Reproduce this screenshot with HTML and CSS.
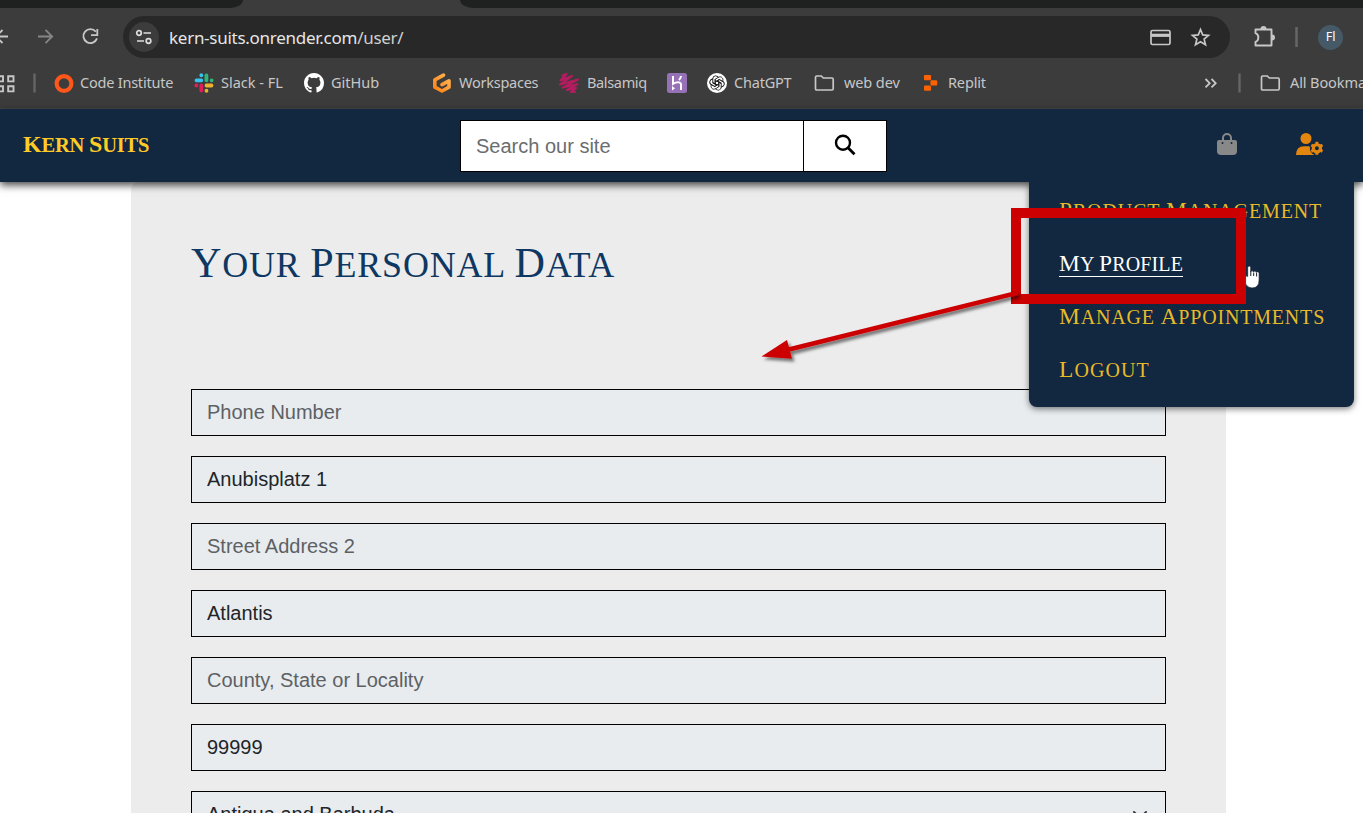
FILE: index.html
```html
<!DOCTYPE html>
<html lang="en">
<head>
<meta charset="utf-8">
<title>Kern Suits</title>
<link rel="stylesheet" href="styles.css">
</head>
<body>
<div class="browser">
  <div class="tabs"><div class="tab-left"></div><div class="tab-right"></div></div>
  <div class="toolbar">
    <svg class="nav-icons" width="123" height="42" viewBox="0 16 123 42" fill="none" stroke="#c7c7c7" stroke-width="1.8"><path d="M-4 36.500H8M-4 36.500L2.500 30M-4 36.500L2.500 43"/><path stroke="#858585" d="M38 36.500H52M45.500 29.800L52.200 36.500L45.500 43.200"/><path d="M95.800 31.600A7 7 0 1 0 97 38.400"/><path d="M97.300 29V35.200H91"/></svg>
    <div class="address">
      <svg width="30" height="30" viewBox="0 0 30 30"><circle cx="15" cy="15" r="15" fill="#3c3c3c"/><g fill="none" stroke="#dedede" stroke-width="1.700"><circle cx="10" cy="11" r="2.300"/><path d="M14.500 11H22M8 19H15"/><circle cx="19.500" cy="19" r="2.300"/></g></svg>
      <span class="url">kern-suits.onrender.com<span class="path">/user/</span></span>
      <svg class="addr-icons" width="66" height="24" viewBox="1147 25 66 24" fill="none" stroke="#c7c7c7" stroke-width="1.700"><rect x="1151" y="30.500" width="19" height="14" rx="1.500"/><path stroke-width="3.200" d="M1151 35.300H1170"/><path d="M1200.500 29.500L1202.700 34.900L1208.500 35.400L1204.100 39.100L1205.500 44.800L1200.500 41.700L1195.500 44.800L1196.900 39.100L1192.500 35.400L1198.300 34.900Z"/></svg>
    </div>
    <svg class="ext" width="56" height="30" viewBox="1248 22 56 30" fill="none" stroke="#c7c7c7" stroke-width="1.900"><path stroke-linejoin="round" d="M1255.500 29.500H1271.500V45.500H1255.500V41.800C1259.300 40.500 1259.300 34.500 1255.500 33.200Z"/><path fill="#c7c7c7" stroke="none" d="M1260.500 29a3 3 0 0 1 6 0zM1272 34.500a3 3 0 0 1 0 6z"/><path stroke="#666" stroke-width="2.500" d="M1296.500 27V47"/></svg>
    <div class="avatar">Fl</div>
  </div>
  <div class="bookmarks">
    <svg width="40" height="26" viewBox="0 70 40 26" fill="none" stroke="#c7c7c7" stroke-width="1.900"><path d="M-3 76.200H3V81.400H-3zM8.200 76.200H13.500V81.400H8.200zM-3 86.200H3V91.400H-3zM8.200 86.200H13.500V91.400H8.200z"/><path stroke="#666" stroke-width="2.300" d="M34.500 73.500V92.500"/></svg>
    <div class="bm"><svg width="20" height="20"><circle cx="10" cy="10.500" r="7.400" fill="none" stroke="#ff5619" stroke-width="4.200"/></svg><span class="w1">Code Institute</span></div>
    <div class="bm"><svg width="20" height="20" fill="none" stroke-width="3.800" stroke-linecap="round"><path stroke="#36c5f0" d="M2.500 7.300H7.300M7.300 2.200V2.300"/><path stroke="#2eb67d" d="M12.400 2.500V7.300M17.600 7.300H17.700"/><path stroke="#ecb22e" d="M12.500 12.500H17.500M12.500 17.700V17.800"/><path stroke="#e01e5a" d="M7.300 12.500V17.500M2.300 12.500H2.400"/></svg><span class="w2">Slack - FL</span></div>
    <div class="bm"><svg width="20" height="20" viewBox="0 0 16 16"><path fill="#fff" d="M8 0C3.580 0 0 3.580 0 8c0 3.540 2.290 6.530 5.470 7.590.4.070.55-.17.55-.38 0-.19-.01-.82-.01-1.490-2.010.37-2.530-.49-2.690-.94-.09-.23-.48-.94-.82-1.130-.28-.15-.68-.52-.01-.53.63-.01 1.080.58 1.230.82.72 1.210 1.870.87 2.330.66.070-.52.28-.87.51-1.070-1.780-.2-3.640-.89-3.640-3.950 0-.87.31-1.590.82-2.150-.08-.2-.36-1.020.08-2.120 0 0 .67-.21 2.200.82a7.600 7.600 0 0 1 4 0c1.530-1.040 2.200-.82 2.200-.82.44 1.100.16 1.920.08 2.120.51.56.82 1.270.82 2.150 0 3.070-1.870 3.750-3.650 3.950.29.25.54.73.54 1.480 0 1.070-.01 1.930-.01 2.200 0 .21.15.46.55.38A8.010 8.010 0 0 0 16 8c0-4.420-3.580-8-8-8z"/></svg><span class="w3">GitHub</span></div>
    <div class="bm"><svg width="20" height="20"><defs><linearGradient id="g" x1="1" x2="0" y1="0" y2="1"><stop stop-color="#ffb557"/><stop offset="1" stop-color="#ff8212"/></linearGradient></defs><path fill="none" stroke="url(#g)" stroke-width="3.600" stroke-linejoin="round" stroke-linecap="round" d="M11.500 2.200L2.800 6.800V14.200L10 18L17 14.200V7.800L10 11.600"/></svg><span class="w4">Workspaces</span></div>
    <div class="bm"><svg width="20" height="20"><path fill="none" stroke="#b51c60" stroke-width="2.100" stroke-linecap="round" stroke-linejoin="round" d="M3.500 2.500L7.500 1L1.500 7.500L13 3L1 11.500L19 6.500L4 14.500L18.500 11.200L8 17L17 15L12 19L16 18.700"/></svg><span class="w5">Balsamiq</span></div>
    <div class="bm"><svg width="20" height="20"><rect width="20" height="20" rx="2.500" fill="#9671b6"/><path fill="none" stroke="#fff" stroke-width="2" d="M6 3V11C10 8.500 14 9 14 11.500V17M14 3C13.900 4.700 13 6 12 7"/><path fill="#fff" d="M5 13L8 15.200L5 17.500z"/></svg></div>
    <div class="bm"><svg width="20" height="20"><circle cx="10" cy="10" r="10" fill="#fff"/><g fill="none" stroke="#171717" stroke-width=".9"><g id="knot-pair"><path id="knot-arm" d="M8.200 10.900V6.200L11.600 4.200C14.600 2.700 17 6 15.400 8.600M8.200 8.900L12.300 6.500"/><use href="#knot-arm" transform="rotate(180 10 10)"/></g><use href="#knot-pair" transform="rotate(60 10 10)"/><use href="#knot-pair" transform="rotate(120 10 10)"/></g></svg><span class="w6">ChatGPT</span></div>
    <div class="bm"><svg width="22" height="20" fill="none" stroke="#c7c7c7" stroke-width="1.700"><path d="M1.500 4.200Q1.500 3 2.700 3H7.300L9.300 5H18Q19.200 5 19.200 6.200V15.800Q19.200 17 18 17H2.700Q1.500 17 1.500 15.800z"/></svg><span class="w7">web dev</span></div>
    <div class="bm"><svg width="18" height="20" fill="#ff6200"><rect x="1" y="2" width="7" height="5.300" rx="1"/><rect x="7.500" y="7.300" width="6.700" height="5.200" rx="1"/><rect x="1" y="12.500" width="7" height="5.300" rx="1"/></svg><span class="w8">Replit</span></div>
    <svg width="56" height="24" viewBox="1204 71 56 24" fill="none" stroke="#c7c7c7" stroke-width="1.800"><path d="M1205.500 79L1209.700 83.200L1205.500 87.400M1211.500 79L1215.700 83.200L1211.500 87.400"/><path stroke="#666" stroke-width="2.300" d="M1239.500 73.500V92.500"/></svg>
    <div class="bm"><svg width="22" height="20" fill="none" stroke="#c7c7c7" stroke-width="1.700"><path d="M1.500 4.200Q1.500 3 2.700 3H7.300L9.300 5H18Q19.200 5 19.200 6.200V15.800Q19.200 17 18 17H2.700Q1.500 17 1.500 15.800z"/></svg><span class="w9">All Bookmarks</span></div>
  </div>
</div>

<header class="site-nav">
  <a class="brand caps"><b>K</b>ern <b>S</b>uits</a>
  <div class="search">
    <div class="search-input">Search our site</div>
    <div class="search-btn"><svg width="22" height="22" viewBox="0 0 22 22" fill="none" stroke="#000" stroke-width="2.400"><circle cx="9" cy="8.700" r="7"/><path stroke-width="2.800" d="M14 13.700L20.500 20.200"/></svg></div>
  </div>
  <div class="user-icons">
    <svg width="20" height="23" viewBox="0 0 20 23"><path fill="#888" d="M2 7H18a2 2 0 0 1 2 2V18a4 4 0 0 1-4 4H4a4 4 0 0 1-4-4V9a2 2 0 0 1 2-2z"/><path fill="none" stroke="#888" stroke-width="2" d="M6 9V5a4 4 0 0 1 8 0V9"/><circle cx="5.500" cy="9.900" r="1" fill="#122740"/><circle cx="14.500" cy="9.900" r="1" fill="#122740"/></svg>
    <svg width="28" height="23" viewBox="0 0 28 23" fill="#e38610"><circle cx="10" cy="5.500" r="5.500"/><path d="M0 22Q0 13.200 8 13.200H12.500L14.700 14L14 17L18.500 22z"/><circle cx="20.900" cy="15.200" r="7" fill="#122740"/><circle cx="20.900" cy="15.200" r="3.600" fill="none" stroke="#e38610" stroke-width="3.200"/><path fill="none" stroke="#e38610" stroke-width="3" d="M20.900 8.700V11M20.900 19.400V21.700M15.300 12L17.300 13.100M24.500 17.300L26.500 18.400M15.300 18.400L17.300 17.300M24.500 13.100L26.500 12"/></svg>
  </div>
  <nav class="menu caps">
    <a class="m1"><b>P</b>roduct <b>M</b>anagement</a>
    <a class="m2 active"><b>M</b>y <b>P</b>rofile</a>
    <a class="m3"><b>M</b>anage <b>A</b>ppointments</a>
    <a class="m4"><b>L</b>ogout</a>
  </nav>
</header>

<main class="panel">
  <h1 class="caps"><b>Y</b>our <b>P</b>ersonal <b>D</b>ata</h1>
  <form class="fields">
    <div class="field hint">Phone Number</div>
    <div class="field">Anubisplatz 1</div>
    <div class="field hint">Street Address 2</div>
    <div class="field">Atlantis</div>
    <div class="field hint">County, State or Locality</div>
    <div class="field">99999</div>
    <div class="field select"><span>Antigua and Barbuda</span><svg width="16" height="16" viewBox="0 0 16 16" fill="none" stroke="#343a40" stroke-width="2" stroke-linecap="round"><path d="M2 5L8 11L14 5"/></svg></div>
  </form>
</main>

<div class="marker"></div>
<svg class="overlay" width="1363" height="813">
  <defs><filter id="s" x="-10%" y="-20%" width="120%" height="150%"><feDropShadow dx="2.500" dy="3" stdDeviation="1.500" flood-color="#000" flood-opacity=".5"/></filter></defs>
  <g filter="url(#s)" fill="#c00"><path d="M1016.500 290.800L1018 295L789.500 351.800L788.300 347.300z"/><path d="M761.500 356.500L787 340L792 358.700z"/></g>
  <path fill="#fff" stroke="#15202e" stroke-width=".7" d="M1247.700 267.500q0-1.500 1.500-1.500t1.500 1.500V272q0-1.200 1.400-1.200t1.400 1.200q.2-.9 1.400-.9t1.400 1.400q.2-.7 1.300-.7 1.500 0 1.500 1.500V280q0 8-7 8-4.500 0-6.500-4v-7q1-2 2.100-.5z"/>
  <path stroke="#15202e" d="M1250.800 271.500V276M1253.700 272.500V276M1256.600 273V276.500"/>
</svg>
</body>
</html>
```
FILE: styles.css
```css
* { box-sizing: border-box; }
body { margin: 0; width: 1363px; height: 813px; overflow: hidden; background: #fff; font-family: "Liberation Sans", Arial, sans-serif; position: relative; }
svg { display: block; flex: none; }

.browser { height: 109px; background: #3c3c3c; border-bottom: 1px solid #484848; font-family: "Noto Sans", sans-serif; }
.tabs { height: 8px; display: flex; justify-content: space-between; }
.tab-left { width: 243px; background: #1f2121; border-bottom-right-radius: 14px 8px; }
.tab-right { width: 903px; background: #1f2121; border-bottom-left-radius: 14px 8px; }
.toolbar { display: flex; align-items: center; height: 58px; }
.address { width: 1107px; height: 42px; border-radius: 21px; background: #282828; display: flex; align-items: center; padding: 0 17px 0 6px; }
.url { margin-left: 10px; flex: 1; color: #e6e6e6; font-size: 17px; letter-spacing: -.27px; white-space: nowrap; }
.path { color: #d0d0d0; }
.ext { margin-left: 18px; }
.avatar { margin-left: 14px; width: 25px; height: 25px; border-radius: 50%; background: #455a66; color: #fff; font: 12.500px/24px "Noto Sans", sans-serif; text-align: center; }

.bookmarks { height: 34px; display: grid; align-items: center; grid-template-columns: 54px 140px 110px 128px 127px 108px 40px 107px 109px 281px 56px 200px; color: #c7c7c7; font-size: 14.500px; overflow: hidden; }
.bm { display: flex; align-items: center; white-space: nowrap; gap: 7px; }
.bm span { padding-bottom: 2px; }
.w1 { margin-left: -1px; letter-spacing: -.22px; }
.w4 { letter-spacing: -.25px; }
.w5 { letter-spacing: -.35px; margin-left: 1px; }
.w6 { letter-spacing: -.2px; }
.w7, .w9 { margin-left: 1px; letter-spacing: -.1px; }
.w8 { letter-spacing: -.15px; }

.site-nav { position: relative; z-index: 2; height: 73px; background: #122740; box-shadow: 0 3px 8px rgba(0,0,0,.75); display: flex; align-items: flex-start; }
.caps { font-family: "Liberation Serif", "Times New Roman", serif; text-transform: uppercase; font-weight: 400; white-space: nowrap; }
.caps b { font-weight: inherit; font-size: 1.170em; }
.brand { margin-left: 23px; width: 437px; line-height: 70px; font-size: 20.500px; font-weight: 700; letter-spacing: -.2px; color: #fecb27; }
.search { margin-top: 11px; display: flex; width: 427px; height: 52px; border: 1px solid #000; background: #fff; }
.search-input { width: 343px; border-right: 1px solid #000; padding-left: 15px; font-size: 20px; line-height: 50px; color: #6a6d70; }
.search-btn { flex: 1; display: flex; justify-content: center; padding-top: 13px; }
.user-icons { margin: 24px 0 0 330px; display: flex; gap: 59px; }
.menu { position: absolute; left: 1029px; top: 73px; width: 325px; height: 225px; padding: 2px 0 0 30px; border-radius: 0 0 8px 8px; background: #122740; clip-path: inset(0 -12px -12px -12px); box-shadow: 0 2px 6px rgba(0,0,0,.5); display: flex; flex-direction: column; align-items: flex-start; font-size: 20px; color: #e7ba29; }
.menu a { line-height: 53px; height: 53px; }
.menu .active { color: #fff; background: linear-gradient(#fff, #fff) 0 39px / 100% 1px no-repeat; }
.m1 { letter-spacing: .88px; }
.m2 { letter-spacing: .15px; }
.m3 { letter-spacing: .82px; }
.m4 { letter-spacing: 1.100px; }

.panel { margin-left: 131px; width: 1095px; height: 640px; padding: 0 60px; background: #ececec; border-top-left-radius: 8px; }
h1 { margin: 0; padding-top: 51px; height: 207px; font-size: 36px; line-height: 60px; letter-spacing: .78px; color: #0e3762; }
.fields { display: grid; gap: 20px; }
.field { height: 47px; border: 1px solid #000; background: #e8ecef; padding-left: 15px; font-size: 20px; line-height: 44px; color: #212529; }
.hint { color: #5d6164; }
.select { display: flex; justify-content: space-between; padding-right: 17px; line-height: 45px; }
.select svg { margin-top: 15px; }

.marker { position: absolute; z-index: 3; left: 1011px; top: 208px; width: 235px; height: 96px; border: 10px solid #c00; }
.overlay { position: absolute; z-index: 4; left: 0; top: 0; }
```
